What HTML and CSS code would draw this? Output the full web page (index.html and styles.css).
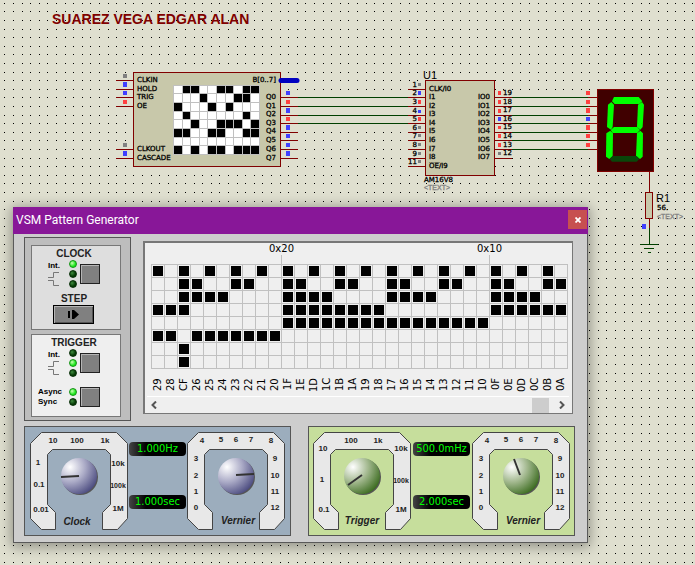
FILE: index.html
```html
<!DOCTYPE html>
<html lang="en">
<head>
<meta charset="utf-8">
<meta name="viewport" content="width=device-width, initial-scale=1">
<title>VSM Pattern Generator</title>
<link rel="stylesheet" href="styles.css">
</head>
<body>
<main class="sheet">
  <svg class="schematic" aria-label="Schematic">
    <defs>
      <pattern id="dots" width="43" height="43" patternUnits="userSpaceOnUse">
        <path fill="#000" shape-rendering="crispEdges" d="M4 3h1v1h-1zM13 3h1v1h-1zM22 3h1v1h-1zM30 3h1v1h-1zM39 3h1v1h-1zM4 11h1v1h-1zM13 11h1v1h-1zM22 11h1v1h-1zM30 11h1v1h-1zM39 11h1v1h-1zM4 20h1v1h-1zM13 20h1v1h-1zM22 20h1v1h-1zM30 20h1v1h-1zM39 20h1v1h-1zM4 29h1v1h-1zM13 29h1v1h-1zM22 29h1v1h-1zM30 29h1v1h-1zM39 29h1v1h-1zM4 37h1v1h-1zM13 37h1v1h-1zM22 37h1v1h-1zM30 37h1v1h-1zM39 37h1v1h-1z"/>
      </pattern>
    </defs>
    <rect width="100%" height="100%" fill="url(#dots)"/>

    <g class="pin">
      <path d="M116 80.5h17M116 89.5h17M116 97.5h17M116 106.5h17M116 149.5h17M116 158.5h17"/>
      <path d="M281 97.5h17M281 106.5h17M281 115.5h17M281 123.5h17M281 132.5h17M281 140.5h17M281 149.5h17M281 158.5h17"/>
      <path d="M408 89.5h17M408 97.5h17M408 106.5h17M408 115.5h17M408 123.5h17M408 132.5h17M408 140.5h17M408 149.5h17M408 158.5h17M408 166.5h17"/>
      <path d="M495 97.5h17M495 106.5h17M495 115.5h17M495 123.5h17M495 132.5h17M495 140.5h17M495 149.5h17M495 158.5h17"/>
      <path d="M588 97.5h9M588 106.5h9M588 115.5h9M588 123.5h9M588 132.5h9M588 140.5h9M588 149.5h9"/>
      <path d="M649.5 172v20M649.5 219v9"/>
    </g>
    <g class="wire">
      <path d="M298 97.5h110M298 106.5h110M298 115.5h110M298 123.5h110"/>
      <path d="M512 97.5h76M512 106.5h76M512 115.5h76M512 123.5h76M512 132.5h76M512 140.5h76M512 149.5h76"/>
      <path d="M649.5 228v16M640 244.5h18M644 248.5h10M648 252.5h3"/>
    </g>

    <rect class="chip" x="133.5" y="72.5" width="147" height="94"/>
    <rect class="chip" x="425.5" y="80.5" width="69" height="95"/>
    <rect class="chip" x="645.5" y="192.5" width="7" height="26"/>
    <path class="bus" d="M281 80.5h16"/>
    <g id="chip-cells" shape-rendering="crispEdges"></g>

    <g class="lv-off"><path d="M123 74h4v4h-4zM123 143h4v4h-4zM418 83h3v3h-3zM418 126h3v3h-3zM418 134h3v3h-3zM418 143h3v3h-3zM418 152h3v3h-3zM418 160h3v3h-3zM498 152h3v3h-3z"/></g>
    <g class="lv-low"><path d="M123 82h4v5h-4zM123 91h4v4h-4zM123 151h4v5h-4zM286 91h4v4h-4zM286 108h4v5h-4zM286 125h4v5h-4zM286 134h4v4h-4zM286 143h4v4h-4zM286 151h4v5h-4zM418 91h3v4h-3zM418 110h3v3h-3zM498 117h3v4h-3zM586 117h4v4h-4zM642 224h4v5h-4z"/></g>
    <g class="lv-high"><path d="M123 100h4v4h-4zM286 100h4v4h-4zM286 117h4v4h-4zM418 100h3v4h-3zM418 117h3v4h-3zM498 91h3v4h-3zM498 100h3v4h-3zM498 109h3v4h-3zM498 126h3v3h-3zM498 134h3v4h-3zM498 143h3v4h-3zM586 91h4v4h-4zM586 100h4v4h-4zM586 108h4v5h-4zM586 125h4v5h-4zM586 134h4v4h-4zM586 143h4v4h-4z"/></g>

    <g class="lbl">
      <text x="137" y="82">CLKIN</text><text x="137" y="91">HOLD</text><text x="137" y="99">TRIG</text><text x="137" y="108">OE</text><text x="137" y="151">CLKOUT</text><text x="137" y="160">CASCADE</text>
      <text x="429" y="91">CLK/I0</text><text x="429" y="99">I1</text><text x="429" y="108">I2</text><text x="429" y="116">I3</text><text x="429" y="125">I4</text><text x="429" y="133">I5</text><text x="429" y="142">I6</text><text x="429" y="151">I7</text><text x="429" y="159">I8</text><text x="429" y="168">OE/I9</text>
      <path d="M429 162.5h11" stroke="#000"/>
      <text x="503" y="95">19</text><text x="503" y="104">18</text><text x="503" y="112">17</text><text x="503" y="121">16</text><text x="503" y="129">15</text><text x="503" y="138">14</text><text x="503" y="147">13</text><text x="503" y="155">12</text>
      <text x="424" y="182">AM16V8</text>
      <text x="657" y="210">56.</text>
    </g>
    <g class="lbl end">
      <text x="276" y="82">B[0..7]</text><text x="276" y="99">Q0</text><text x="276" y="108">Q1</text><text x="276" y="116">Q2</text><text x="276" y="125">Q3</text><text x="276" y="133">Q4</text><text x="276" y="142">Q5</text><text x="276" y="151">Q6</text><text x="276" y="160">Q7</text>
      <text x="490" y="99">IO0</text><text x="490" y="108">IO1</text><text x="490" y="116">IO2</text><text x="490" y="125">IO3</text><text x="490" y="133">IO4</text><text x="490" y="142">IO5</text><text x="490" y="151">IO6</text><text x="490" y="159">IO7</text>
      <text x="417" y="87">1</text><text x="417" y="95">2</text><text x="417" y="104">3</text><text x="417" y="113">4</text><text x="417" y="121">5</text><text x="417" y="130">6</text><text x="417" y="138">7</text><text x="417" y="147">8</text><text x="417" y="156">9</text><text x="417" y="164">11</text>
    </g>
    <g class="note"><text x="424" y="190">&lt;TEXT&gt;</text><text x="657" y="219">&lt;TEXT&gt;</text></g>
    <g class="ref"><text x="423" y="79">U1</text><text x="656" y="202">R1</text></g>

    <rect x="597.5" y="89.5" width="56" height="82" fill="#400000" stroke="#800000"/>
    <g transform="translate(580 80) scale(.3333)" fill="#0f0">
      <path d="M102 51H176L187 64 178 72H104L96 64Z"/>
      <path d="M94 66L102 74 98 141 93 149 81 141 84 74Z"/>
      <path d="M186 66L192 74 188 141 181 149 171 141 174 74Z"/>
      <path d="M102 141H172L180 150 172 159H98L92 150Z"/>
      <path d="M91 152L99 160 98 228 88 237 78 230 79 160Z"/>
      <path d="M181 152L189 160 188 230 180 237 168 228 171 160Z"/>
      <path fill="#0a460a" d="M98 228H170L178 237 170 245H96L89 237Z"/>
    </g>
  </svg>

  <h1 class="author">SUAREZ VEGA EDGAR ALAN</h1>

  <section class="window" aria-labelledby="win-title">
    <header class="titlebar">
      <h2 id="win-title">VSM Pattern Generator</h2>
      <button class="close" type="button" aria-label="Close"><svg width="6" height="6" viewBox="0 0 6 6"><path d="M.5.5l5 5M5.5.5l-5 5" stroke="#fff" stroke-width="1.8"/></svg></button>
    </header>
    <div class="body">
      <div class="top">
        <div class="modes">
          <section class="mode">
            <h3>CLOCK</h3>
            <div class="pick">
              <div class="kinds"><span>Int.</span><svg width="12" height="16" viewBox="0 0 12 16"><path d="M0 6.5h5.500v-5H11M0 9.500h5.500v5H11"/></svg></div>
              <div class="leds"><i class="led on"></i><i class="led"></i><i class="led"></i></div>
              <button class="key" type="button" aria-label="Clock mode"></button>
            </div>
            <h3 class="step-title">STEP</h3>
            <button class="step" type="button" aria-label="Step"><svg width="12" height="9" viewBox="0 0 12 9"><path d="M1 1v7" stroke="#000" stroke-width="2"/><path d="M4 0h2l5 4.500-5 4.500H4z"/></svg></button>
          </section>
          <section class="mode light">
            <h3>TRIGGER</h3>
            <div class="pick">
              <div class="kinds"><span>Int.</span><svg width="12" height="16" viewBox="0 0 12 16"><path d="M0 6.500h5.500v-5H11M0 9.500h5.500v5H11"/></svg></div>
              <div class="leds"><i class="led"></i><i class="led on"></i><i class="led"></i></div>
              <button class="key" type="button" aria-label="Trigger mode"></button>
            </div>
            <div class="pick sync">
              <div class="kinds"><span>Async</span><span>Sync</span></div>
              <div class="leds"><i class="led on"></i><i class="led"></i></div>
              <button class="key" type="button" aria-label="Trigger sync"></button>
            </div>
          </section>
        </div>
        <div class="view">
          <table class="pattern">
            <thead><tr><td></td></tr></thead>
            <tbody></tbody>
            <tfoot></tfoot>
          </table>
          <div class="scroll">
            <button type="button" aria-label="Scroll left"><svg width="6" height="8" viewBox="0 0 6 8"><path d="M5 .5L1.500 4 5 7.500"/></svg></button>
            <span class="thumb"></span>
            <button type="button" aria-label="Scroll right"><svg width="6" height="8" viewBox="0 0 6 8"><path d="M1 .5L4.500 4 1 7.500"/></svg></button>
          </div>
        </div>
      </div>

      <svg width="0" height="0" class="defs">
        <defs>
          <radialGradient id="blue" cx=".25" cy=".25" r=".85"><stop offset="0" stop-color="#fff"/><stop offset=".5" stop-color="#aaaac6"/><stop offset="1" stop-color="#4c4c80"/></radialGradient>
          <radialGradient id="green" cx=".25" cy=".25" r=".85"><stop offset="0" stop-color="#fff"/><stop offset=".5" stop-color="#a2b88e"/><stop offset="1" stop-color="#3c6c20"/></radialGradient>
          <path id="ring" d="M.5 11.500L11.500.5H86.500L97.500 11.500V86.500L87.500 97.500H72.500V80.500L80.500 72.500V22.500L75.500 17.500H22.500L17.500 22.500V72.500L25.500 80.500V97.500H11.500L.5 86.500Z"/>
        </defs>
      </svg>
      <div class="banks">
        <section class="bank blue">
          <svg class="dial" width="98" height="98" viewBox="0 0 98 98">
            <use href="#ring"/><circle cx="50" cy="45" r="18" fill="#555"/><circle cx="49" cy="44" r="18" fill="url(#blue)"/><path class="hand" d="M49 44L31 45"/>
            <text x="23" y="11">10</text><text x="47" y="11">100</text><text x="75" y="11">1k</text><text x="8" y="33">1</text><text x="9" y="55">0.1</text><text x="11" y="80">0.01</text><text x="88" y="34">10k</text><text class="tight" x="88" y="56">100k</text><text x="88" y="79">1M</text>
            <text class="name" x="47" y="93">Clock</text>
          </svg>
          <div class="readouts"><output>1.000Hz</output><output>1.000sec</output></div>
          <svg class="dial" width="98" height="98" viewBox="0 0 98 98">
            <use href="#ring"/><circle cx="50" cy="45" r="18" fill="#555"/><circle cx="49" cy="44" r="18" fill="url(#blue)"/><path class="hand" d="M49 43L67 42"/>
            <text x="15" y="11">4</text><text x="34" y="10">5</text><text x="49" y="10">6</text><text x="64" y="10">7</text><text x="84" y="11">8</text><text x="9" y="29">3</text><text x="9" y="46">2</text><text x="9" y="62">1</text><text x="9" y="78">0</text><text x="88" y="29">9</text><text x="88" y="46">10</text><text x="88" y="62">11</text><text x="88" y="78">12</text>
            <text class="name" x="51" y="92">Vernier</text>
          </svg>
        </section>
        <section class="bank green">
          <svg class="dial" width="98" height="98" viewBox="0 0 98 98">
            <use href="#ring"/><circle cx="50" cy="45" r="18" fill="#555"/><circle cx="49" cy="44" r="18" fill="url(#green)"/><path class="hand" d="M49 43L35 53"/>
            <text x="38" y="11">100</text><text x="65" y="11">1k</text><text x="10" y="19">10</text><text x="9" y="50">1</text><text x="11" y="80">0.1</text><text x="88" y="19">10k</text><text class="tight" x="88" y="51">100k</text><text x="88" y="80">1M</text>
            <text class="name" x="49" y="92">Trigger</text>
          </svg>
          <div class="readouts"><output>500.0mHz</output><output>2.000sec</output></div>
          <svg class="dial" width="98" height="98" viewBox="0 0 98 98">
            <use href="#ring"/><circle cx="50" cy="45" r="18" fill="#555"/><circle cx="49" cy="44" r="18" fill="url(#green)"/><path class="hand" d="M48 43L42 27"/>
            <text x="15" y="11">4</text><text x="34" y="10">5</text><text x="49" y="10">6</text><text x="64" y="10">7</text><text x="84" y="11">8</text><text x="9" y="29">3</text><text x="9" y="46">2</text><text x="9" y="62">1</text><text x="9" y="78">0</text><text x="88" y="29">9</text><text x="88" y="46">10</text><text x="88" y="62">11</text><text x="88" y="78">12</text>
            <text class="name" x="51" y="92">Vernier</text>
          </svg>
        </section>
      </div>
    </div>
  </section>
</main>
<script src="script.js"></script>
</body>
</html>
```
FILE: styles.css
```css
* { box-sizing: border-box; }

body {
  margin: 0;
  font-family: "Liberation Sans", Arial, sans-serif;
  color: #000;
}

h1, h2, h3 { margin: 0; }
button { padding: 0; border: 0; }

.sheet {
  position: relative;
  min-height: 100vh;
  overflow: hidden;
  background: #dfdfcf;
}

.schematic {
  position: absolute;
  inset: 0;
  width: 100%;
  height: 100%;
}

.pin, .wire { fill: none; shape-rendering: crispEdges; }
.pin { stroke: #800000; }
.wire { stroke: #004000; }
.chip { fill: #c8c8aa; stroke: #800000; shape-rendering: crispEdges; }
.bus { stroke: #0000c0; stroke-width: 5; stroke-linecap: round; }
.lv-off { fill: #808080; }
.lv-low { fill: #4040ff; }
.lv-high { fill: #ff4040; }
.lbl { font: 7px "DejaVu Sans", sans-serif; stroke: #000; stroke-width: .3; }
.end { text-anchor: end; }
.note { font: 7px "Liberation Sans", sans-serif; fill: #808080; stroke: #808080; stroke-width: .3; }
.ref { font: 11px "Liberation Sans", sans-serif; }

.author {
  position: relative;
  padding: 10px 0 0 52px;
  font-size: 14px;
  line-height: 18px;
  color: #800000;
}

.window {
  position: absolute;
  left: 13px;
  top: 207px;
  border: 1px solid #5a5a5a;
  border-top-color: #881798;
  background: #cdcdcd;
  box-shadow: 0 2px 12px 2px rgba(0, 0, 0, .35);
}

.titlebar {
  display: flex;
  justify-content: space-between;
  align-items: flex-start;
  height: 26px;
  padding: 0 1px 0 3px;
  margin: 0 -1px;
  background: #881798;
  color: #fff;
}

.titlebar h2 {
  font: 12px/24px Roboto, sans-serif;
}

.close {
  display: grid;
  place-items: center;
  width: 19px;
  height: 19px;
  margin-top: 2px;
  background: #c75050;
}

.body { padding: 3px 12px 6px 10px; }
.top { display: flex; gap: 12px; align-items: flex-start; }

.modes {
  display: grid;
  gap: 4px;
  width: 107px;
  padding: 7px 9px 3px 6px;
  border: 1px solid #555;
  background: #bdbdbd;
}

.mode {
  height: 85px;
  padding: 2px 6px 0 10px;
  border: 1px solid #777;
  background: #dedede;
}
.mode.light { height: 83px; background: #efefef; }
.mode h3 {
  margin-left: -8px;
  font-size: 10px;
  line-height: 11px;
  text-align: center;
  color: #222;
}

.pick { display: flex; align-items: center; height: 30px; }
.kinds {
  display: flex;
  flex-direction: column;
  align-items: center;
  width: 24px;
  font-size: 8px;
  font-weight: bold;
  line-height: 10px;
}
.kinds svg { fill: none; stroke: #777; }
.leds { display: grid; gap: 2px; margin: 0 3px 0 3px; }
.led {
  width: 8px;
  height: 8px;
  border: 1px solid #052f05;
  border-radius: 50%;
  background: radial-gradient(circle at 35% 35%, #3d8a3d, #043804 60%);
}
.led.on {
  border-color: #119411;
  background: radial-gradient(circle at 35% 35%, #c8ffb0, #1ee61e 60%);
}
.key {
  width: 20px;
  height: 20px;
  border: 1px solid #222;
  background: #808080;
  box-shadow: inset 1px 1px #b5b5b5;
}
.step-title { margin-top: 4px; }
.step {
  display: grid;
  place-items: center;
  width: 41px;
  height: 19px;
  margin: 1px 0 0 11px;
  border: 1px solid #000;
  background: #808080;
  box-shadow: inset 1px 1px #b5b5b5, inset -1px -1px #555;
}
.sync { margin-top: 4px; }
.sync .kinds { align-items: flex-start; margin-left: -4px; width: 28px; }

.view {
  margin-top: 4px;
  padding: 0 4px 0 6px;
  border: 2px solid #777;
  border-right-width: 1px;
  border-bottom-width: 1px;
  background: #efefef;
}

.pattern {
  border-spacing: 0;
  font: 10px/12px "DejaVu Sans", sans-serif;
}
.pattern td, .pattern th { box-sizing: content-box; padding: 0; font-weight: normal; }
.pattern thead th { height: 21px; vertical-align: top; width: 13px; }
.pattern thead .mark {
  position: relative;
  background: linear-gradient(#c0c0c0, #c0c0c0) left bottom / 1px 9px no-repeat;
}
.mark span { position: absolute; top: 0; left: -12px; }
.pattern tbody td {
  width: 10px;
  height: 10px;
  padding: 1px;
  border: solid #c0c0c0;
  border-width: 1px 0 0 1px;
  background-clip: content-box;
}
.pattern tbody td:last-child { border-right-width: 1px; }
.pattern tbody tr:last-child td { border-bottom-width: 1px; }
.pattern .hi { background-color: #000; }
.pattern tfoot th { height: 27px; vertical-align: bottom; }
.pattern tfoot span {
  display: block;
  width: 13px;
  height: 18px;
  line-height: 13px;
  writing-mode: vertical-rl;
  transform: rotate(180deg);
  text-align: right;
}

.scroll {
  display: flex;
  justify-content: flex-end;
  align-items: center;
  height: 17px;
  margin: 0 -1px 0 -4px;
  border-top: 1px solid #fff;
}
.scroll button { width: 14px; height: 15px; background: none; }
.scroll button:first-child { margin-right: auto; }
.scroll svg { display: block; margin: auto; fill: none; stroke: #555; stroke-width: 2; }
.thumb { width: 17px; height: 15px; margin-right: 6px; background: #cdcdcd; }

.defs { position: absolute; }
.banks { display: flex; justify-content: space-between; gap: 17px; margin-top: 5px; }
.bank {
  display: flex;
  justify-content: space-between;
  width: 267px;
  height: 110px;
  padding: 5px;
  border: 1px solid #555;
}
.bank.blue { background: #9cadbd; }
.bank.green { background: #c6de9c; padding: 5px 4px; }
.dial { fill: #e8e8e8; stroke: #444; }
.dial circle { stroke: none; }
.hand { stroke: #333; stroke-width: 2; }
.dial text {
  fill: #222;
  stroke: none;
  font-size: 8px;
  font-weight: bold;
  text-anchor: middle;
}
.dial .tight { font-size: 7px; }
.dial .name { font-size: 10px; font-style: italic; }

.readouts {
  display: flex;
  flex-direction: column;
  gap: 39px;
  padding-top: 10px;
  width: 57px;
}
.readouts output {
  height: 14px;
  border-radius: 4px;
  background: linear-gradient(90deg, #444, #000 30%);
  color: #0f0;
  font: 11px/14px "DejaVu Sans Condensed", "DejaVu Sans", sans-serif;
  text-align: center;
}
```
FILE: script.js
```js
// Words on screen, most recent first; each column shows one word, bit 0 on top.
const words = ["29", "28", "CF", "26", "25", "24", "23", "22", "21", "20"];
for (let v = 0x1f; v >= 0x0a; v--) words.push(v.toString(16).toUpperCase().padStart(2, "0"));

const table = document.querySelector(".pattern");
const marks = { 10: "0x20", 26: "0x10" };
table.tHead.innerHTML = "<tr>" + words.map((w, i) =>
  marks[i] ? `<th class="mark"><span>${marks[i]}</span></th>` : "<th></th>").join("") + "</tr>";

let rows = "";
for (let bit = 0; bit < 8; bit++) {
  rows += "<tr>" + words.map(w =>
    (parseInt(w, 16) >> bit) & 1 ? '<td class="hi"></td>' : "<td></td>").join("") + "</tr>";
}
table.tBodies[0].innerHTML = rows;
table.tFoot.innerHTML = "<tr>" + words.map(w => `<th><span>${w}</span></th>`).join("") + "</tr>";

// Miniature pattern on the generator component.
const mini = [".XX..XX.XX", "...X...XX.", "X...X.X...", ".X......X.",
  "..X..XXX.X", "XX..XX..XX", "..........", "X.X.XX.XXX"];
const xs = [174, 183, 191, 200, 208, 217, 226, 234, 243, 251, 260];
const ys = [86, 94, 103, 112, 120, 129, 138, 146, 155];
let cells = '<rect x="173" y="85" width="87" height="70" fill="#c0c0c0"/>';
mini.forEach((row, r) => [...row].forEach((c, i) => {
  cells += `<rect x="${xs[i]}" y="${ys[r]}" width="${xs[i + 1] - xs[i] - 1}" height="${ys[r + 1] - ys[r] - 1}" fill="${c === "X" ? "#000" : "#fff"}"/>`;
}));
document.getElementById("chip-cells").innerHTML = cells;
```
